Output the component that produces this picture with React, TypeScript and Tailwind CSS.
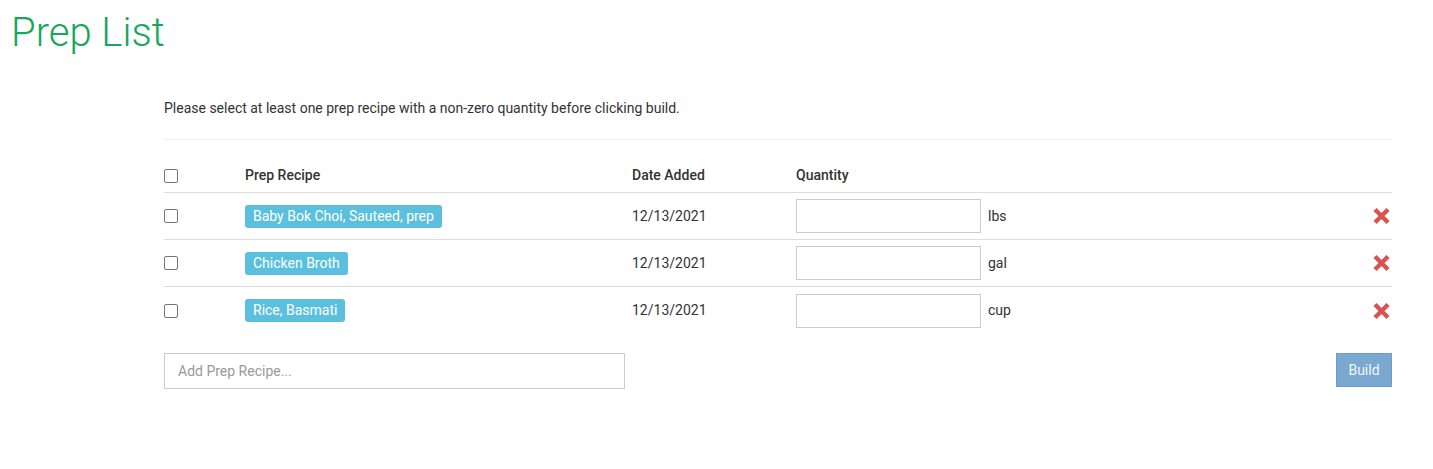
import React from "react";

const rows = [
  { name: "Baby Bok Choi, Sauteed, prep", date: "12/13/2021", unit: "lbs" },
  { name: "Chicken Broth", date: "12/13/2021", unit: "gal" },
  { name: "Rice, Basmati", date: "12/13/2021", unit: "cup" },
];

function Check() {
  return (
    <span className="block w-[14px] h-[14px] border border-[#767676] rounded-[2px] bg-white" />
  );
}

function XIcon() {
  return (
    <svg width="19" height="18" viewBox="0 0 19 18">
      <path d="M3 2.5 L16 15.5 M16 2.5 L3 15.5" stroke="#d9534f" strokeWidth="4.4" strokeLinecap="butt" />
    </svg>
  );
}

export default function App() {
  return (
    <div className="w-[1433px] h-[469px] bg-white text-[#333] font-['Roboto',sans-serif] text-[14px]">
      <h1 className="pl-[11px] pt-[8px] text-[40px] leading-[50px] font-light text-[#16a75a]">Prep List</h1>
      <div className="ml-[164px] w-[1228px]">
        <p className="mt-[40px] leading-[20px]">Please select at least one prep recipe with a non-zero quantity before clicking build.</p>
        <div className="mt-[21px] border-t border-[#eee]" />
        <div className="mt-[25px] h-[20px] grid grid-cols-[81px_387px_164px_1fr_auto] items-center">
          <div className="flex items-center"><Check /></div>
          <div className="font-medium">Prep Recipe</div>
          <div className="font-medium">Date Added</div>
          <div className="font-medium">Quantity</div>
          <div />
        </div>
        <div className="mt-[7px] border-t border-[#ddd]">
          {rows.map((r, i) => (
            <div
              key={r.name}
              className={`grid grid-cols-[81px_387px_164px_1fr_auto] items-center h-[47px] ${i < rows.length - 1 ? "border-b border-[#ddd]" : ""}`}
            >
              <div className="flex items-center"><Check /></div>
              <div>
                <span className="inline-block bg-[#5bc0de] text-white rounded-[3px] px-[8px] h-[23px] leading-[23px]">{r.name}</span>
              </div>
              <div>{r.date}</div>
              <div className="flex items-center gap-[7px]">
                <input className="w-[185px] h-[34px] border border-[#ccc] bg-white outline-none" />
                <span>{r.unit}</span>
              </div>
              <div className="pr-[1px] flex items-center"><XIcon /></div>
            </div>
          ))}
        </div>
        <div className="mt-[19px] flex justify-between items-start">
          <input
            placeholder="Add Prep Recipe..."
            className="w-[461px] h-[36px] border border-[#ccc] px-[13px] text-[14px] placeholder:text-[#999] outline-none"
          />
          <button className="w-[56px] h-[34px] bg-[#7aa8d0] text-[#f0f5fa] border border-[#6d9cc7] text-[14px]">Build</button>
        </div>
      </div>
    </div>
  );
}
